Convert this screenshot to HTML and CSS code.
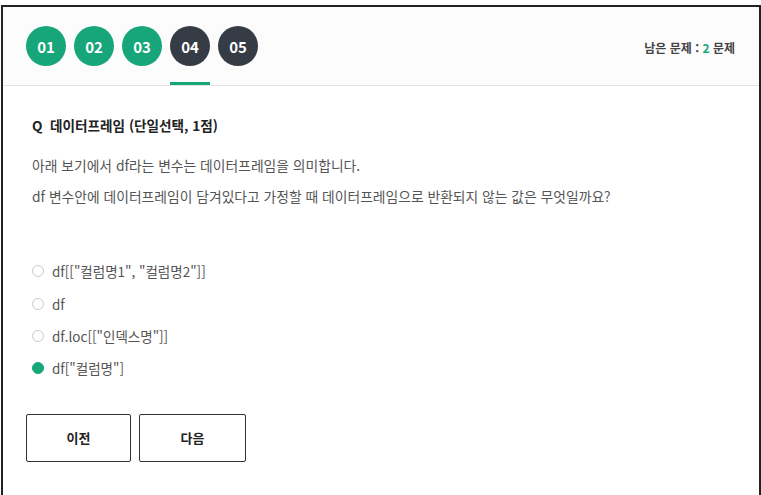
FILE: index.html
```html
<!DOCTYPE html>
<html lang="ko">
<head>
<meta charset="utf-8">
<link rel="stylesheet" href="styles.css">
</head>
<body>
<div class="frame">
  <header class="top">
    <nav class="steps">
      <div class="step"><span class="dot done">01</span></div>
      <div class="step"><span class="dot done">02</span></div>
      <div class="step"><span class="dot done">03</span></div>
      <div class="step active"><span class="dot">04</span></div>
      <div class="step"><span class="dot">05</span></div>
    </nav>
    <div class="remain">남은 문제 : <em>2</em> 문제</div>
  </header>
  <main class="body">
    <h2 class="q">Q&nbsp;&nbsp;데이터프레임 (단일선택, 1점)</h2>
    <p class="desc">아래 보기에서 df라는 변수는 데이터프레임을 의미합니다.</p>
    <p class="desc">df 변수안에 데이터프레임이 담겨있다고 가정할 때 데이터프레임으로 반환되지 않는 값은 무엇일까요?</p>
    <ul class="opts">
      <li class="opt"><span class="radio"></span>df[["컬럼명1", "컬럼명2"]]</li>
      <li class="opt"><span class="radio"></span>df</li>
      <li class="opt"><span class="radio"></span>df.loc[["인덱스명"]]</li>
      <li class="opt"><span class="radio on"></span>df["컬럼명"]</li>
    </ul>
    <div class="btns">
      <button class="btn">이전</button>
      <button class="btn">다음</button>
    </div>
  </main>
</div>
</body>
</html>
```

FILE: styles.css
```css
* { box-sizing: border-box; }
html, body { margin: 0; padding: 0; background: #fff; }
body {
  font-family: "Noto Sans CJK KR", "Noto Sans", sans-serif;
  color: #333;
  padding: 5px 0 0 1px;
}
.frame {
  border: 2px solid #222;
  border-bottom: none;
  width: 760px;
  height: 490px;
}
.top {
  height: 79px;
  background: #fcfcfc;
  border-bottom: 1px solid #e3e3e3;
  display: flex;
  align-items: center;
  justify-content: space-between;
  padding: 0 24px 0 23px;
}
.steps { display: flex; gap: 8px; align-self: stretch; }
.step {
  display: flex;
  align-items: center;
  border-bottom: 3px solid transparent;
  padding-top: 3px;
}
.step.active { border-bottom-color: #17a679; }
.dot {
  width: 40px; height: 40px; border-radius: 50%;
  background: #353c45; color: #fff;
  display: flex; align-items: center; justify-content: center;
  font-size: 15px; font-weight: 700;
}
.dot.done { background: #17a679; }
.remain { font-size: 12px; font-weight: 700; color: #444; padding-top: 3px; }
.remain em { font-style: normal; color: #17a679; }
.body { padding: 28px 23px 0 29px; }
.q { margin: 0 0 19px; font-size: 13.6px; font-weight: 700; color: #222; line-height: 22px; }
.desc { margin: 0 0 10px; font-size: 13.8px; color: #555; line-height: 21px; }
.opts { list-style: none; margin: 48px 0 0; padding: 0; }
.opt {
  display: flex; align-items: center;
  height: 32.4px; font-size: 13.5px; color: #555;
}
.radio {
  width: 12px; height: 12px; border-radius: 50%;
  border: 1px solid #ccc; margin: 0 8px 0 0;
}
.radio.on { background: #17a679; border-color: #17a679; }
.btns { display: flex; gap: 8px; margin-top: 29px; margin-left: -6px; }
.btn {
  width: 105px; height: 48px;
  border: 1px solid #333; border-radius: 2px; background: #fff;
  font-family: inherit; font-size: 13px; font-weight: 700; color: #222;
}
.btn + .btn { width: 107px; }
```
